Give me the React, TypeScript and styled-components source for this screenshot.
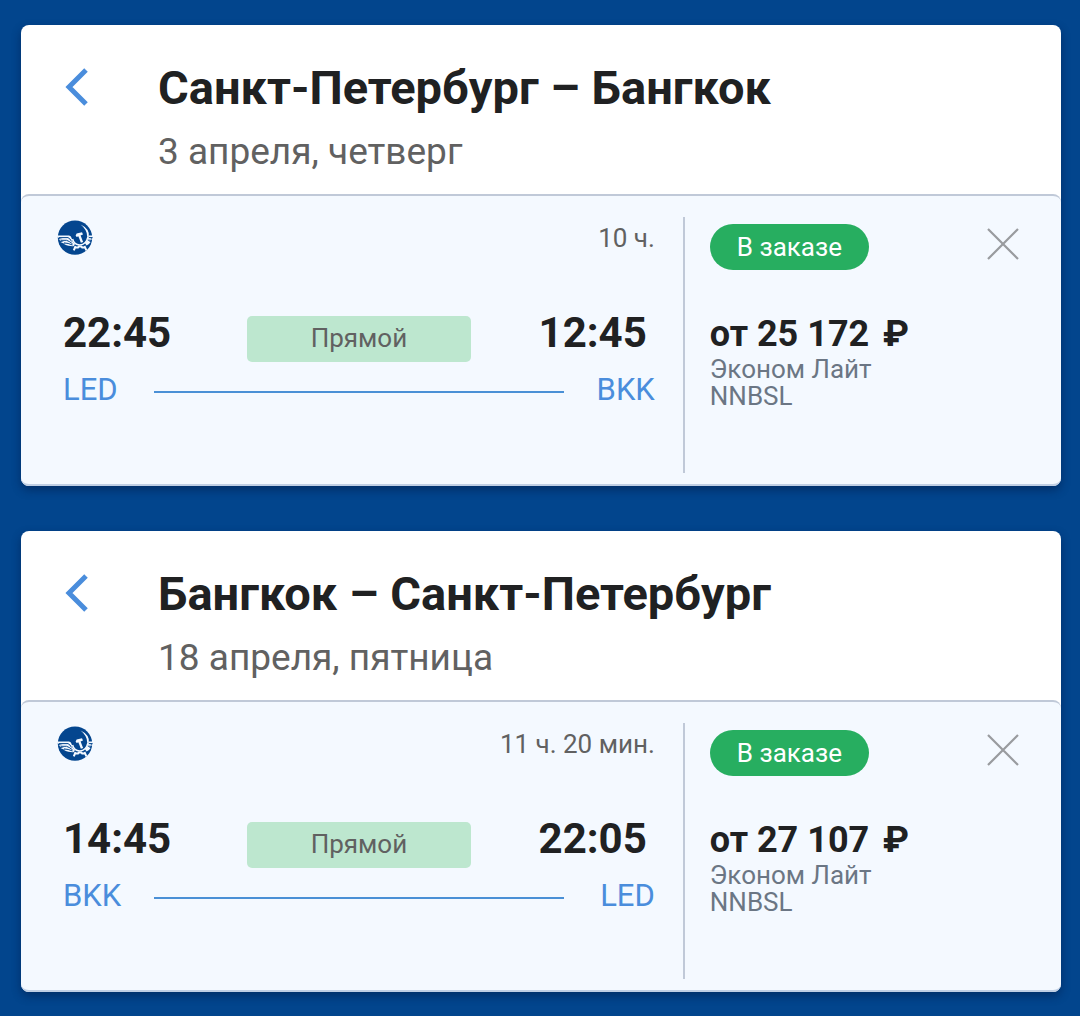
import React from "react";
import styled, { createGlobalStyle } from "styled-components";

const GlobalStyle = createGlobalStyle`
  *, *::before, *::after { box-sizing: border-box; }
  body {
    margin: 0;
    background: #02458d;
    color: #202122;
    font-family: Roboto, "Noto Sans", sans-serif;
  }
  h2, p { margin: 0; }
`;

const Page = styled.main`
  display: flex;
  flex-direction: column;
  gap: 45px;
  padding: 25px 19px 24px 21px;
`;

const Card = styled.article`
  border-radius: 8px;
  background: #fff;
  box-shadow: 0 4px 10px rgba(0, 20, 60, 0.45);
`;

const CardHeader = styled.header`
  display: flex;
  align-items: flex-start;
  gap: 61px;
  padding: 34px 40px 21px 36px;
`;

const IconButton = styled.button`
  display: flex;
  align-items: center;
  justify-content: center;
  flex: none;
  width: 40px;
  height: 40px;
  padding: 0;
  border: 0;
  background: none;
  cursor: pointer;
`;

const BackButton = styled(IconButton)`
  height: 56px;
  color: #4a8ddc;
`;

const Title = styled.h2`
  font-size: 47px;
  line-height: 58px;
  font-weight: 700;
`;

const DateText = styled.p`
  padding-top: 13px;
  font-size: 37px;
  line-height: 43px;
  color: #616161;
`;

const CardBody = styled.div`
  display: grid;
  grid-template-columns: 7fr 4fr;
  padding: 21px 0 11px;
  border-top: 2px solid #c0c9d8;
  border-bottom: 2px solid #c0cfe4;
  border-radius: 8px;
  background: #f4f9ff;
`;

const Flight = styled.section`
  padding: 3px 28px 62px 36px;
`;

const FlightTop = styled.div`
  display: flex;
  align-items: center;
  justify-content: space-between;
  height: 36px;
`;

const Duration = styled.span`
  font-size: 26px;
  line-height: 32px;
  color: #616161;
`;

const Times = styled.div`
  display: grid;
  grid-template-columns: 1fr 224px 1fr;
  align-items: start;
  padding: 52px 0 0 6px;
`;

const Time = styled.time<{ $end?: boolean }>`
  padding-right: ${(p) => (p.$end ? "8px" : "0")};
  font-size: 42px;
  line-height: 50px;
  font-weight: 700;
  text-align: ${(p) => (p.$end ? "right" : "left")};
`;

const Direct = styled.span`
  height: 46px;
  margin-top: 8px;
  border-radius: 5px;
  background: #bde7cf;
  color: #616161;
  font-size: 26px;
  line-height: 44px;
  text-align: center;
`;

const Airports = styled.div`
  display: grid;
  grid-template-columns: 91px 1fr 91px;
  align-items: center;
  padding: 7px 0 0 6px;
`;

const Code = styled.span<{ $end?: boolean }>`
  color: #4a8ddc;
  font-size: 31px;
  line-height: 42px;
  text-align: ${(p) => (p.$end ? "right" : "left")};
`;

const Line = styled.div`
  height: 2px;
  margin-top: 4px;
  background: #4a90d6;
`;

const Fare = styled.section`
  padding: 7px 38px 0 25px;
  border-left: 2px solid #c0c9d8;
`;

const FareTop = styled.div`
  display: flex;
  align-items: flex-start;
  justify-content: space-between;
`;

const Status = styled.span`
  padding: 0 27px;
  border-radius: 23px;
  background: #27ae60;
  color: #fff;
  font-size: 26px;
  line-height: 46px;
`;

const Price = styled.p`
  padding-top: 42px;
  font-size: 36px;
  line-height: 44px;
  font-weight: 700;
`;

const Currency = styled.span`
  margin-left: 4px;
  font-family: Inter, Roboto, sans-serif;
  line-height: 1;
`;

const FareText = styled.p`
  color: #6b7684;
  font-size: 26px;
  line-height: 27px;
`;

const Chevron = () => (
  <svg width="40" height="40" viewBox="0 0 40 40" fill="none" aria-hidden="true">
    <path d="M29 3 L12 20 L29 37" stroke="currentColor" strokeWidth="5" />
  </svg>
);

const Cross = () => (
  <svg width="32" height="32" viewBox="0 0 32 32" fill="none" aria-hidden="true">
    <path d="M1 1 L31 31 M31 1 L1 31" stroke="#999b9f" strokeWidth="2.2" />
  </svg>
);

const AirlineLogo = () => (
  <svg width="36" height="36" viewBox="0 0 36 36" role="img" aria-label="Аэрофлот">
    <circle cx="18" cy="17.6" r="17.2" fill="#04468f" />
    <path d="M0.4 15.6 H12 Q14 15.8 14.6 18 Q15 22 18 24 L16.5 26.2 Q12 26.4 7 24.4 L9 24 Q6 23.4 3.4 22 L7 21.6 Q3.6 20.8 1.4 19.4 L5.6 19 Q2 18.4 0.4 17 Z" fill="#f4f9ff" />
    <path d="M36 15.6 H31.6 Q31.4 20.4 28 23.2 L29.6 25.4 Q32.4 24.2 33.6 22 L32 21.4 Q34.4 20.6 35.2 18.8 L33.4 18.4 Q35.6 17.8 36 15.6 Z" fill="#f4f9ff" />
    <g fill="none" stroke="#04468f" strokeWidth="1">
      <path d="M2 17.6 H11 Q13 18.4 14.5 21.4" />
      <path d="M4 20.3 H9.5 Q12 21 15.5 23.8" />
      <path d="M7 22.9 Q11 23 15.5 25" />
      <path d="M35.5 17.6 H32 M34.6 20.2 H31" />
    </g>
    <circle cx="22.8" cy="16.6" r="7.4" fill="#04468f" />
    <g fill="none" stroke="#f4f9ff">
      <path d="M15.6 19 Q17 24.8 22.8 25 Q29.2 24.8 31 16.6" strokeWidth="1.5" />
      <path d="M18.6 26 L16.8 30.4 M27.4 26 L29.4 30.4 M17.8 27.6 H21 L21.8 26.4 H24.4 L25.2 27.6 H28.2" strokeWidth="2" />
      <path d="M22 14.6 L25 22.4" strokeWidth="2.4" />
    </g>
    <path d="M18.6 15.4 L19.6 13.6 L25 12.2 L26 14.4 L19.6 17 Z" fill="#f4f9ff" />
    <path d="M23.6 4.6 Q33 9 31.8 16.8 L30.2 16.8 Q30.4 10 23.6 4.6 Z" fill="#f4f9ff" />
  </svg>
);

interface Trip {
  title: string;
  date: string;
  duration: string;
  departure: string;
  arrival: string;
  from: string;
  to: string;
  price: string;
}

const trips: Trip[] = [
  {
    title: "Санкт-Петербург – Бангкок",
    date: "3 апреля, четверг",
    duration: "10 ч.",
    departure: "22:45",
    arrival: "12:45",
    from: "LED",
    to: "BKK",
    price: "от 25 172",
  },
  {
    title: "Бангкок – Санкт-Петербург",
    date: "18 апреля, пятница",
    duration: "11 ч. 20 мин.",
    departure: "14:45",
    arrival: "22:05",
    from: "BKK",
    to: "LED",
    price: "от 27 107",
  },
];

const TripCard = ({ trip }: { trip: Trip }) => (
  <Card>
    <CardHeader>
      <BackButton type="button" aria-label="Назад">
        <Chevron />
      </BackButton>
      <div>
        <Title>{trip.title}</Title>
        <DateText>{trip.date}</DateText>
      </div>
    </CardHeader>
    <CardBody>
      <Flight>
        <FlightTop>
          <AirlineLogo />
          <Duration>{trip.duration}</Duration>
        </FlightTop>
        <Times>
          <Time>{trip.departure}</Time>
          <Direct>Прямой</Direct>
          <Time $end>{trip.arrival}</Time>
        </Times>
        <Airports>
          <Code>{trip.from}</Code>
          <Line />
          <Code $end>{trip.to}</Code>
        </Airports>
      </Flight>
      <Fare>
        <FareTop>
          <Status>В заказе</Status>
          <IconButton type="button" aria-label="Удалить">
            <Cross />
          </IconButton>
        </FareTop>
        <Price>
          {trip.price} <Currency>₽</Currency>
        </Price>
        <FareText>
          Эконом Лайт
          <br />
          NNBSL
        </FareText>
      </Fare>
    </CardBody>
  </Card>
);

export default function App() {
  return (
    <>
      <GlobalStyle />
      <Page>
        {trips.map((trip) => (
          <TripCard key={trip.title} trip={trip} />
        ))}
      </Page>
    </>
  );
}
